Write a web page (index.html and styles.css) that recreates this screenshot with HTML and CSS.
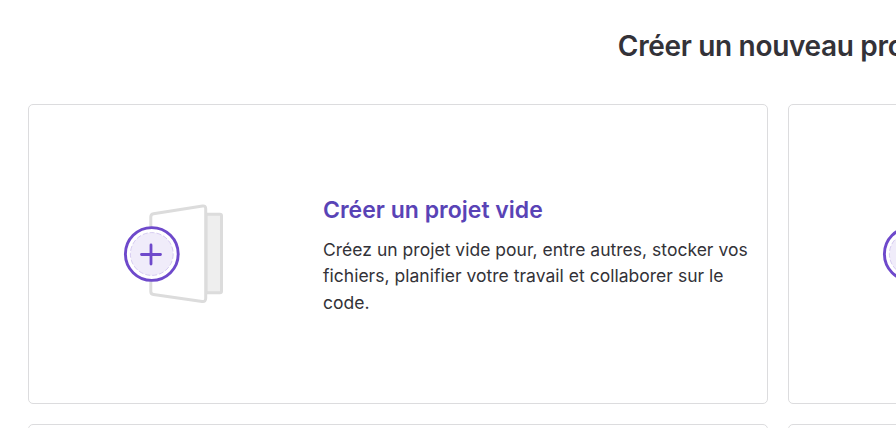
FILE: index.html
```html
<!DOCTYPE html>
<html lang="fr">
<head>
<meta charset="utf-8">
<title>Créer un nouveau projet</title>
<link rel="stylesheet" href="styles.css">
</head>
<body>
<svg class="defs" width="0" height="0" aria-hidden="true">
  <symbol id="new-project" viewBox="0 0 108 108">
    <path d="M86 14.300h14q1.500 0 1.500 1.500v75.400q0 1.500-1.500 1.500H86z" fill="#eee" stroke="#dcdcdc" stroke-width="3"/>
    <path d="M30.800 17q0-2.800 2.700-3.300L82.500 6q3.200-.5 3.200 2.800v89.400q0 3.700-3.500 3.200L33.500 94.600q-2.700-.4-2.700-3.100z" fill="#fff" stroke="#dcdcdc" stroke-width="3"/>
    <circle cx="31.800" cy="54" r="26.400" fill="#fff" stroke="#6e49cb" stroke-width="2.900"/>
    <circle cx="31.800" cy="54" r="21.400" fill="#f0ecfa" stroke="#cdc0ee" stroke-width=".8" stroke-dasharray="5 2"/>
    <path d="M31 45v19M21.500 54.500h19" fill="none" stroke="#6e49cb" stroke-width="2.800" stroke-linecap="round"/>
  </symbol>
</svg>
<main class="page">
  <h1 class="page-title">Créer un nouveau projet</h1>
  <div class="cards">
    <a class="card">
      <div class="illustration"><svg class="icon"><use href="#new-project"/></svg></div>
      <div class="content">
        <h2 class="card-title">Créer un projet vide</h2>
        <p class="card-text">Créez un projet vide pour, entre autres, stocker vos fichiers, planifier votre travail et collaborer sur le code.</p>
      </div>
    </a>
    <a class="card">
      <div class="illustration"><svg class="icon"><use href="#new-project"/></svg></div>
    </a>
    <a class="card"></a>
    <a class="card"></a>
  </div>
</main>
</body>
</html>
```
FILE: styles.css
```css
* { box-sizing: border-box; }
body {
  margin: 0;
  height: 428px;
  overflow: hidden;
  background: #fff;
  color: #333238;
  font-family: Inter, "Liberation Sans", sans-serif;
}
.defs { display: none; }
.page { width: 1500px; margin-left: 28px; padding-top: 28px; }
.page-title {
  margin: 0 0 40px;
  font-size: 28px;
  line-height: 36px;
  font-weight: 600;
  letter-spacing: -0.33px;
  text-align: center;
  text-indent: -1px;
}
.cards {
  display: grid;
  grid-template-columns: 739.6px 739.6px;
  grid-auto-rows: 300px;
  gap: 20px;
}
.card {
  display: flex;
  align-items: center;
  border: 1px solid #dcdcde;
  border-radius: 5px;
}
.illustration { flex: none; width: 294px; padding-left: 90.8px; }
.icon { display: block; width: 108px; height: 108px; }
.content { width: 430px; padding-top: 3px; }
.card-title {
  margin: 0 0 12px;
  color: #5943b6;
  font-size: 23px;
  line-height: 30px;
  font-weight: 600;
  letter-spacing: 0.01px;
}
.card-text { margin: 0; font-size: 17.5px; line-height: 26.5px; letter-spacing: 0.02px; }
```
